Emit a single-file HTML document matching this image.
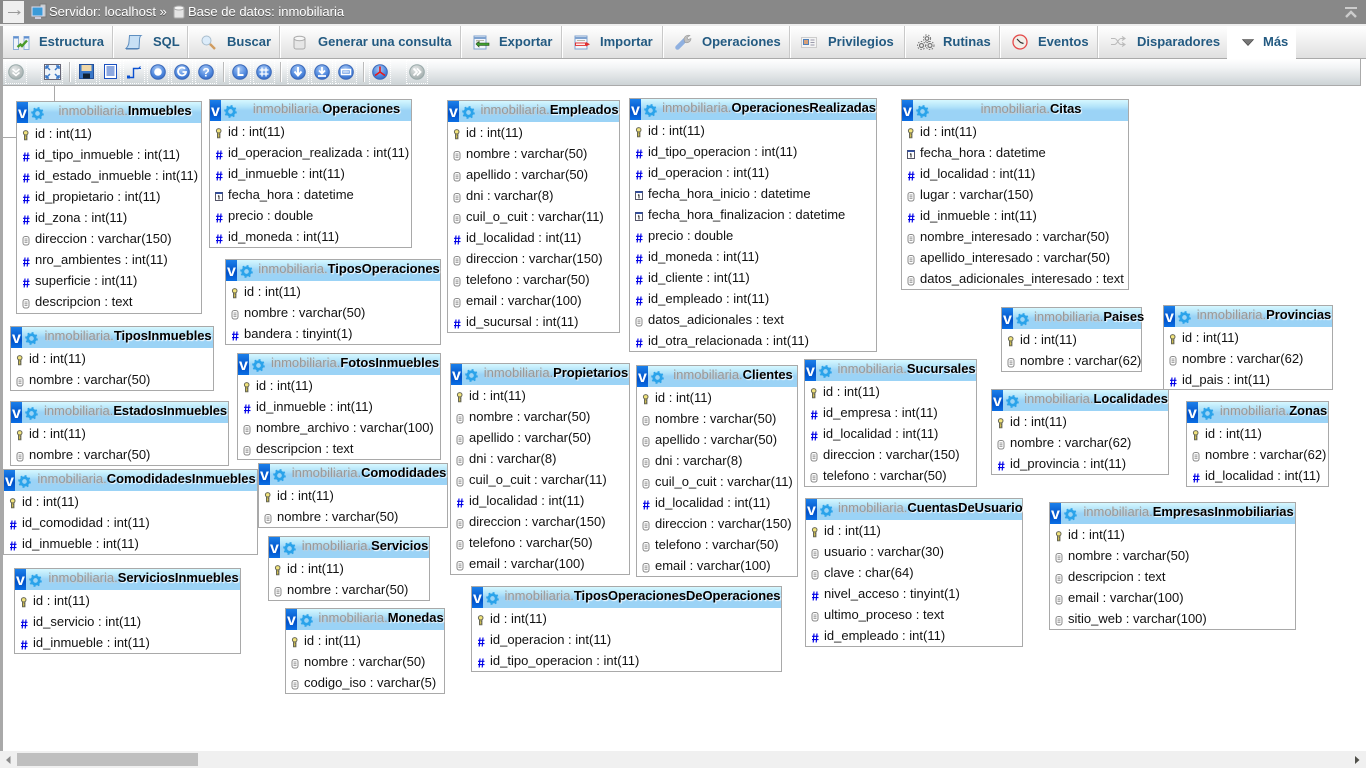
<!DOCTYPE html>
<html lang="es">
<head>
<meta charset="utf-8">
<title>Base de datos: inmobiliaria</title>
<style>
html,body{margin:0;padding:0;width:1366px;height:768px;overflow:hidden;background:#fff;font-family:"Liberation Sans",Arial,sans-serif;font-size:13px;color:#000}
#bar{position:absolute;left:0;top:0;width:1366px;height:24px;background:#888}
#arrow{position:absolute;left:3px;top:1px;width:21px;height:22px;background:#efefef}
.bt{position:absolute;top:3px;line-height:18px;color:#fff;text-shadow:0 1px 0 #555;white-space:nowrap}
#white1{position:absolute;left:0;top:24px;width:1366px;height:2px;background:#eee}
#tabs{position:absolute;left:3px;top:26px;width:1363px;height:32px;background:linear-gradient(#fff,#e0e0e0);border-bottom:1px solid #aaa}
.sep{position:absolute;top:26px;width:1px;height:32px;background:#c9c9c9;border-right:1px solid #fff}
.tab{position:absolute;top:26px;line-height:32px;font-weight:bold;color:#235a81;white-space:nowrap}
#mas{position:absolute;left:1227px;top:26px;width:69px;height:33px;background:#fff}
#tool{position:absolute;left:3px;top:59px;width:1357px;height:26px;background:linear-gradient(#fff 0%,#f3f5f6 30%,#cdd3d6 100%);border-right:1px solid #aaa;border-bottom:1px solid #aaa}
.ts{position:absolute;top:62px;width:1px;height:20px;background:#bbb;border-right:1px solid #fff}
.tb{position:absolute;top:60px;width:20px;height:22px;border:1px dotted #fff}
.ic{position:absolute;overflow:visible}
#left2{position:absolute;left:0;top:24px;width:3px;height:727px;background:#a9a9a9}
.ln{position:absolute;background:#a9a9a9}
#sb{position:absolute;left:0;top:751px;width:1366px;height:17px;background:#f0f0f0}
#th{position:absolute;left:17px;top:2px;width:181px;height:13px;background:#bfbfbf}
.t{position:absolute;box-sizing:border-box;border:1px solid #a9a9a9;background:#fff;white-space:nowrap}
.h{position:relative;height:21px;background:linear-gradient(#d6f7ff 0%,#b5e5fa 30%,#9bd3f6 50%,#9bd3f6 100%)}
.v{position:absolute;left:0;top:0;width:11px;height:21px;background:linear-gradient(#1b80ea,#0050c8 60%,#0a6fe5);color:#fff;font-weight:bold;font-size:16px;line-height:23px;text-align:center}
.g{position:absolute;left:14px;top:5px;width:13px;height:13px}
.n{position:absolute;left:32px;right:0;top:0;text-align:center;line-height:17px;color:#999;text-shadow:1px 1px 1px #ccc}
.n b{color:#000;text-shadow:1px 1px 1px #fff;letter-spacing:-.07px}
.t p{position:relative;margin:0;height:21px;line-height:21px;padding-left:18px;color:#111}
.t p svg{position:absolute;left:4px;top:7px;width:10px;height:12px}
</style>
</head>
<body>
<svg width="0" height="0" style="position:absolute">
<defs>
<radialGradient id="bl" cx=".45" cy=".3" r=".8"><stop offset="0" stop-color="#a9c9f5"/><stop offset=".6" stop-color="#4f88de"/><stop offset="1" stop-color="#2a5cb8"/></radialGradient>
<radialGradient id="gy" cx=".4" cy=".3" r=".8"><stop offset="0" stop-color="#e5e8e8"/><stop offset="1" stop-color="#9aa5a5"/></radialGradient>
<symbol id="k" viewBox="0 0 10 12"><ellipse cx="4.700" cy="2.800" rx="2.300" ry="2.200" fill="#f2e47c" stroke="#665"/><path d="M3.500 5h2.400v4.800H3.500z" fill="#e0cc50" stroke="#665"/><path d="M4.700 6.600h1.200M4.700 8.200h1.200" stroke="#665"/></symbol>
<symbol id="f" viewBox="0 0 10 12"><path d="M4 1.500 3.200 10.500M7 1.500 6.200 10.500M2 4.300h6.500M2 7.600h6.500" stroke="#0000e8" stroke-width="1.150" fill="none"/></symbol>
<symbol id="s" viewBox="0 0 10 12"><rect x="2" y="1.500" width="6" height="8.500" rx="2.200" fill="#fff" stroke="#8a8a8a"/><path d="M3.500 4h3M3.500 5.700h3M3.500 7.400h3" stroke="#9a9a9a"/></symbol>
<symbol id="d" viewBox="0 0 10 12"><rect x="1.500" y="1.500" width="7" height="8" fill="#fff" stroke="#556"/><path d="M1.500 2.100h7" stroke="#2a48a0" stroke-width="1.700"/><path d="M5 4.500v4" stroke="#222"/><path d="M4 5.300l1-.8" stroke="#222"/></symbol>
<symbol id="gr" viewBox="0 0 14 14"><circle cx="7" cy="7" r="4" fill="none" stroke="#2ba3ea" stroke-width="3"/><circle cx="7" cy="7" r="6" fill="none" stroke="#2ba3ea" stroke-width="1.600" stroke-dasharray="2.200 2.500"/></symbol>
<symbol id="b" viewBox="0 0 16 16"><circle cx="8" cy="8" r="7.300" fill="url(#bl)" stroke="#3a68b8"/></symbol>
</defs>
</svg>

<div id="left2"></div>
<div id="bar"></div>
<div id="arrow"></div>
<svg class="ic" style="left:8px;top:9px" width="13" height="7"><path d="M0 3.500h12M9.500 1.500l2.500 2-2.500 2" stroke="#999" fill="none"/></svg>
<svg class="ic" style="left:31px;top:4px" width="16" height="16"><rect x="9" y="0" width="6" height="13" fill="#c8ccd0" stroke="#777"/><rect x="1" y="3" width="11" height="9" fill="#3a9ad8" stroke="#dde"/><path d="M4 14h6" stroke="#ccd" stroke-width="2"/></svg>
<div class="bt" style="left:49px">Servidor: localhost »</div>
<svg class="ic" style="left:173px;top:5px" width="12" height="15"><rect x="1" y="2" width="10" height="11" rx="1.500" fill="#e4e4e4" stroke="#aaa"/><ellipse cx="6" cy="3" rx="5" ry="2" fill="#f6f6f6" stroke="#aaa"/></svg>
<div class="bt" style="left:188px">Base de datos: inmobiliaria</div>
<svg class="ic" style="left:1345px;top:7px" width="12" height="11"><path d="M0 1h12" stroke="#ccc" stroke-width="2"/><path d="M1 10 6 5l5 5" stroke="#ccc" stroke-width="2.400" fill="none"/></svg>
<div id="white1"></div>

<div id="tabs"></div>
<div id="mas"></div>
<i class="sep" style="left:112px"></i><i class="sep" style="left:187px"></i><i class="sep" style="left:279px"></i><i class="sep" style="left:460px"></i><i class="sep" style="left:561px"></i><i class="sep" style="left:662px"></i><i class="sep" style="left:789px"></i><i class="sep" style="left:904px"></i><i class="sep" style="left:999px"></i><i class="sep" style="left:1097px"></i>
<div class="tab" style="left:39px">Estructura</div>
<div class="tab" style="left:153px">SQL</div>
<div class="tab" style="left:227px">Buscar</div>
<div class="tab" style="left:318px">Generar una consulta</div>
<div class="tab" style="left:499px">Exportar</div>
<div class="tab" style="left:600px">Importar</div>
<div class="tab" style="left:702px">Operaciones</div>
<div class="tab" style="left:828px">Privilegios</div>
<div class="tab" style="left:943px">Rutinas</div>
<div class="tab" style="left:1038px">Eventos</div>
<div class="tab" style="left:1137px">Disparadores</div>
<div class="tab" style="left:1263px">Más</div>

<svg class="ic" style="left:13px;top:35px" width="17" height="16"><rect x=".5" y="1.500" width="5" height="13" fill="#eef3fa" stroke="#8fb0d8"/><rect x="11" y="1.500" width="5" height="13" fill="#eef3fa" stroke="#8fb0d8"/><path d="M.5 2.500h5M11 2.500h5" stroke="#5f8fd0" stroke-width="2"/><path d="M4.500 12 7.500 9.500 9 11 14 5.500" stroke="#4a9a28" stroke-width="2.400" fill="none"/></svg>
<svg class="ic" style="left:125px;top:34px" width="17" height="17"><path d="M4.500 1.500H16c-1.500 1-1.500 3-1.500 5l-.5 8H1c2-2 3-4 3-7z" fill="#c8e0f5" stroke="#5f8fc0"/><path d="M1 15h11c1 0 2-.5 2-1" stroke="#4a7ab0" fill="none"/></svg>
<svg class="ic" style="left:201px;top:35px" width="15" height="15"><circle cx="5.500" cy="5.500" r="4.500" fill="#dcecfa" stroke="#a8bccc"/><path d="M9 9l5 5" stroke="#d09c60" stroke-width="2.400"/></svg>
<svg class="ic" style="left:293px;top:35px" width="13" height="16"><rect x="1" y="2" width="11" height="12" rx="2" fill="#e6e6e6" stroke="#aaa"/><ellipse cx="6.500" cy="3.500" rx="5.500" ry="2.200" fill="#f6f6f6" stroke="#aaa"/></svg>
<svg class="ic" style="left:473px;top:35px" width="17" height="15"><rect x="1" y="1" width="12" height="13" fill="#f3f5fa" stroke="#7fa3d0"/><path d="M1 3h12" stroke="#7fa3d0" stroke-width="2"/><path d="M3 5.500h8M3 7h4" stroke="#b8b8a8"/><path d="M3 9 6 6.500V8h10v2.400H6V12z" fill="#40a030" stroke="#204a18" stroke-width=".6"/></svg>
<svg class="ic" style="left:574px;top:35px" width="17" height="15"><rect x="1" y="1" width="12" height="13" fill="#f3f5fa" stroke="#7fa3d0"/><path d="M1 3h12" stroke="#7fa3d0" stroke-width="2"/><path d="M3 5.500h8" stroke="#b8b8a8"/><rect x="1.500" y="8" width="10" height="2.400" fill="#fff" stroke="#e03030"/><path d="M12 7l4 2.300-4 2.200z" fill="#e03030"/></svg>
<svg class="ic" style="left:675px;top:33px" width="18" height="18"><path d="M2.500 14.500 10 7" stroke="#8fb0e0" stroke-width="4.500" stroke-linecap="round"/><path d="M9 6.500c0-3 3-5 6-4l-3 2 1 2 3-1c0 3-3 5-6 4z" fill="#c0c0c0" stroke="#999" stroke-width=".6"/></svg>
<svg class="ic" style="left:801px;top:36px" width="16" height="14"><rect x=".5" y="1.500" width="15" height="10" fill="#f4f4f4" stroke="#ccc"/><rect x="2.500" y="3.500" width="5" height="5" fill="#d8a078" stroke="#5080b8"/><path d="M9.500 4h4M9.500 6.500h4M9.500 9h4" stroke="#99a"/></svg>
<svg class="ic" style="left:917px;top:34px" width="18" height="17"><g fill="none" stroke="#777"><circle cx="4.500" cy="11.500" r="2" stroke-width="1.200"/><circle cx="4.500" cy="11.500" r="4" stroke-dasharray="1.500 1.500"/><circle cx="13" cy="11.500" r="2" stroke-width="1.200"/><circle cx="13" cy="11.500" r="4" stroke-dasharray="1.500 1.500"/><circle cx="10" cy="4.500" r="1.800" stroke-width="1.200"/><circle cx="10" cy="4.500" r="3.600" stroke-dasharray="1.500 1.500"/></g></svg>
<svg class="ic" style="left:1012px;top:34px" width="16" height="16"><circle cx="8" cy="8" r="7" fill="#f2eee8" stroke="#e44848" stroke-width="1.300"/><path d="M5 5 8.500 8.500 11.500 9.500" stroke="#333" stroke-width="1.200" fill="none"/></svg>
<svg class="ic" style="left:1111px;top:36px" width="15" height="12"><path d="M0 2.500h3.500c3 0 3.500 6 6.500 6h3M0 8.500h3.500c3 0 3.500-6 6.500-6h3M11 .5l3 2-3 2M11 6.500l3 2-3 2" fill="none" stroke="#bbb" stroke-width="1.100"/></svg>
<svg class="ic" style="left:1242px;top:39px" width="12" height="7"><path d="M.5.500h11L6 6.500z" fill="#777" stroke="#444" stroke-width=".6"/></svg>

<div id="tool"></div>
<i class="ts" style="left:69px"></i><i class="ts" style="left:223px"></i><i class="ts" style="left:280px"></i><i class="ts" style="left:363px"></i>
<i class="tb" style="left:5px"></i><i class="tb" style="left:41px"></i><i class="tb" style="left:75px"></i><i class="tb" style="left:99px"></i><i class="tb" style="left:123px"></i><i class="tb" style="left:147px"></i><i class="tb" style="left:171px"></i><i class="tb" style="left:195px"></i><i class="tb" style="left:229px"></i><i class="tb" style="left:253px"></i><i class="tb" style="left:287px"></i><i class="tb" style="left:311px"></i><i class="tb" style="left:335px"></i><i class="tb" style="left:369px"></i><i class="tb" style="left:406px"></i>

<svg class="ic" style="left:8px;top:64px" width="16" height="16"><circle cx="8" cy="8" r="7.300" fill="url(#gy)" stroke="#9aa"/><path d="M4.500 5 8 8l3.500-3M4.500 8.500 8 11.500l3.500-3" stroke="#fff" stroke-width="1.500" fill="none"/></svg>
<svg class="ic" style="left:44px;top:64px" width="17" height="16"><rect x=".5" y=".5" width="16" height="15" fill="#f0f4f8" stroke="#667"/><path d="M2 2l4 4M15 2l-4 4M2 14l4-4M15 14l-4-4M2 2h3M2 2v3M15 2h-3M15 2v3M2 14h3M2 14v-3M15 14h-3M15 14v-3" stroke="#3a78c8" stroke-width="1.500" fill="none"/></svg>
<svg class="ic" style="left:79px;top:64px" width="15" height="15"><rect x=".5" y=".5" width="14" height="14" fill="#3a78c8" stroke="#24509a"/><rect x="2.500" y="1" width="10" height="6" fill="#f0d8a8"/><rect x="4" y="9.500" width="7" height="5" fill="#123"/></svg>
<svg class="ic" style="left:104px;top:64px" width="13" height="15"><rect x=".5" y=".5" width="12" height="14" fill="#fff" stroke="#1a50c0"/><path d="M2.500 3h8M2.500 5h8M2.500 7h8M2.500 9h8M2.500 11h8" stroke="#1a50c0" stroke-width="1"/></svg>
<svg class="ic" style="left:127px;top:65px" width="15" height="14"><path d="M1.500 12.500h5v-9h5" stroke="#0a50d0" stroke-width="1.400" fill="none"/><rect x="0" y="10.500" width="3" height="3" fill="#0a50d0"/><path d="M11.500 3.500l2-2M11.500 3.500h2.500" stroke="#0a50d0"/></svg>

<svg class="ic" style="left:150px;top:64px" width="16" height="16"><use href="#b"/><circle cx="8" cy="8" r="3.800" fill="#fff"/></svg>
<svg class="ic" style="left:174px;top:64px" width="16" height="16"><use href="#b"/><path d="M11 4.800A4 4 0 1 0 12 8H8.500" stroke="#fff" stroke-width="1.800" fill="none"/></svg>
<svg class="ic" style="left:198px;top:64px" width="16" height="16"><use href="#b"/><text x="8" y="12.500" text-anchor="middle" font-family="Liberation Sans,sans-serif" font-weight="bold" font-size="12" fill="#fff">?</text></svg>
<svg class="ic" style="left:232px;top:64px" width="16" height="16"><use href="#b"/><path d="M6.500 3.500v7.500h5" stroke="#fff" stroke-width="2" fill="none"/></svg>
<svg class="ic" style="left:256px;top:64px" width="16" height="16"><use href="#b"/><path d="M6 3.500v9M10 3.500v9M3.500 6h9M3.500 10h9" stroke="#fff" stroke-width="1.300"/></svg>
<svg class="ic" style="left:290px;top:64px" width="16" height="16"><use href="#b"/><path d="M8 3v8M4.500 7.500 8 11.500l3.500-4" stroke="#fff" stroke-width="2" fill="none"/></svg>
<svg class="ic" style="left:314px;top:64px" width="16" height="16"><use href="#b"/><path d="M8 3v6M5 6.500 8 9.500l3-3M4 12h8" stroke="#fff" stroke-width="1.800" fill="none"/></svg>
<svg class="ic" style="left:338px;top:64px" width="16" height="16"><use href="#b"/><path d="M3.500 5.500h9v5h-9z" fill="none" stroke="#fff" stroke-width="1.500"/><path d="M5 8h6" stroke="#fff"/></svg>
<svg class="ic" style="left:372px;top:64px" width="16" height="16"><use href="#b"/><path d="M8 2.500 8 8M8 8 3 11.500M8 8l5 3.500" stroke="#e81818" stroke-width="1.600" fill="none"/></svg>
<svg class="ic" style="left:409px;top:64px" width="16" height="16"><circle cx="8" cy="8" r="7.300" fill="url(#gy)" stroke="#9aa"/><path d="M4.500 4.500 8 8l-3.500 3.500M8 4.500 11.500 8 8 11.500" stroke="#fff" stroke-width="1.800" fill="none"/></svg>

<div class="ln" style="left:54px;top:86px;width:1px;height:15px"></div>
<div class="ln" style="left:3px;top:137px;width:13px;height:1px"></div>

<div class="t" style="left:16px;top:101px;width:186px;height:213px"><div class="h"><div class="v">v</div><svg class="g"><use href="#gr"/></svg><div class="n">inmobiliaria.<b>Inmuebles</b></div></div>
<p><svg><use href="#k"/></svg>id : int(11)</p><p><svg><use href="#f"/></svg>id_tipo_inmueble : int(11)</p><p><svg><use href="#f"/></svg>id_estado_inmueble : int(11)</p><p><svg><use href="#f"/></svg>id_propietario : int(11)</p><p><svg><use href="#f"/></svg>id_zona : int(11)</p><p><svg><use href="#s"/></svg>direccion : varchar(150)</p><p><svg><use href="#f"/></svg>nro_ambientes : int(11)</p><p><svg><use href="#f"/></svg>superficie : int(11)</p><p><svg><use href="#s"/></svg>descripcion : text</p></div>

<div class="t" style="left:209px;top:99px;width:203px;height:149px"><div class="h"><div class="v">v</div><svg class="g"><use href="#gr"/></svg><div class="n">inmobiliaria.<b>Operaciones</b></div></div>
<p><svg><use href="#k"/></svg>id : int(11)</p><p><svg><use href="#f"/></svg>id_operacion_realizada : int(11)</p><p><svg><use href="#f"/></svg>id_inmueble : int(11)</p><p><svg><use href="#d"/></svg>fecha_hora : datetime</p><p><svg><use href="#f"/></svg>precio : double</p><p><svg><use href="#f"/></svg>id_moneda : int(11)</p></div>

<div class="t" style="left:447px;top:100px;width:173px;height:233px"><div class="h"><div class="v">v</div><svg class="g"><use href="#gr"/></svg><div class="n">inmobiliaria.<b>Empleados</b></div></div>
<p><svg><use href="#k"/></svg>id : int(11)</p><p><svg><use href="#s"/></svg>nombre : varchar(50)</p><p><svg><use href="#s"/></svg>apellido : varchar(50)</p><p><svg><use href="#s"/></svg>dni : varchar(8)</p><p><svg><use href="#s"/></svg>cuil_o_cuit : varchar(11)</p><p><svg><use href="#f"/></svg>id_localidad : int(11)</p><p><svg><use href="#s"/></svg>direccion : varchar(150)</p><p><svg><use href="#s"/></svg>telefono : varchar(50)</p><p><svg><use href="#s"/></svg>email : varchar(100)</p><p><svg><use href="#f"/></svg>id_sucursal : int(11)</p></div>

<div class="t" style="left:629px;top:98px;width:248px;height:254px"><div class="h"><div class="v">v</div><svg class="g"><use href="#gr"/></svg><div class="n">inmobiliaria.<b>OperacionesRealizadas</b></div></div>
<p><svg><use href="#k"/></svg>id : int(11)</p><p><svg><use href="#f"/></svg>id_tipo_operacion : int(11)</p><p><svg><use href="#f"/></svg>id_operacion : int(11)</p><p><svg><use href="#d"/></svg>fecha_hora_inicio : datetime</p><p><svg><use href="#d"/></svg>fecha_hora_finalizacion : datetime</p><p><svg><use href="#f"/></svg>precio : double</p><p><svg><use href="#f"/></svg>id_moneda : int(11)</p><p><svg><use href="#f"/></svg>id_cliente : int(11)</p><p><svg><use href="#f"/></svg>id_empleado : int(11)</p><p><svg><use href="#s"/></svg>datos_adicionales : text</p><p><svg><use href="#f"/></svg>id_otra_relacionada : int(11)</p></div>

<div class="t" style="left:901px;top:99px;width:228px;height:191px"><div class="h"><div class="v">v</div><svg class="g"><use href="#gr"/></svg><div class="n">inmobiliaria.<b>Citas</b></div></div>
<p><svg><use href="#k"/></svg>id : int(11)</p><p><svg><use href="#d"/></svg>fecha_hora : datetime</p><p><svg><use href="#f"/></svg>id_localidad : int(11)</p><p><svg><use href="#s"/></svg>lugar : varchar(150)</p><p><svg><use href="#f"/></svg>id_inmueble : int(11)</p><p><svg><use href="#s"/></svg>nombre_interesado : varchar(50)</p><p><svg><use href="#s"/></svg>apellido_interesado : varchar(50)</p><p><svg><use href="#s"/></svg>datos_adicionales_interesado : text</p></div>

<div class="t" style="left:225px;top:259px;width:216px;height:86px"><div class="h"><div class="v">v</div><svg class="g"><use href="#gr"/></svg><div class="n">inmobiliaria.<b>TiposOperaciones</b></div></div>
<p><svg><use href="#k"/></svg>id : int(11)</p><p><svg><use href="#s"/></svg>nombre : varchar(50)</p><p><svg><use href="#f"/></svg>bandera : tinyint(1)</p></div>

<div class="t" style="left:10px;top:326px;width:204px;height:65px"><div class="h"><div class="v">v</div><svg class="g"><use href="#gr"/></svg><div class="n">inmobiliaria.<b>TiposInmuebles</b></div></div>
<p><svg><use href="#k"/></svg>id : int(11)</p><p><svg><use href="#s"/></svg>nombre : varchar(50)</p></div>

<div class="t" style="left:237px;top:353px;width:204px;height:107px"><div class="h"><div class="v">v</div><svg class="g"><use href="#gr"/></svg><div class="n">inmobiliaria.<b>FotosInmuebles</b></div></div>
<p><svg><use href="#k"/></svg>id : int(11)</p><p><svg><use href="#f"/></svg>id_inmueble : int(11)</p><p><svg><use href="#s"/></svg>nombre_archivo : varchar(100)</p><p><svg><use href="#s"/></svg>descripcion : text</p></div>

<div class="t" style="left:450px;top:363px;width:180px;height:212px"><div class="h"><div class="v">v</div><svg class="g"><use href="#gr"/></svg><div class="n">inmobiliaria.<b>Propietarios</b></div></div>
<p><svg><use href="#k"/></svg>id : int(11)</p><p><svg><use href="#s"/></svg>nombre : varchar(50)</p><p><svg><use href="#s"/></svg>apellido : varchar(50)</p><p><svg><use href="#s"/></svg>dni : varchar(8)</p><p><svg><use href="#s"/></svg>cuil_o_cuit : varchar(11)</p><p><svg><use href="#f"/></svg>id_localidad : int(11)</p><p><svg><use href="#s"/></svg>direccion : varchar(150)</p><p><svg><use href="#s"/></svg>telefono : varchar(50)</p><p><svg><use href="#s"/></svg>email : varchar(100)</p></div>

<div class="t" style="left:636px;top:365px;width:162px;height:212px"><div class="h"><div class="v">v</div><svg class="g"><use href="#gr"/></svg><div class="n">inmobiliaria.<b>Clientes</b></div></div>
<p><svg><use href="#k"/></svg>id : int(11)</p><p><svg><use href="#s"/></svg>nombre : varchar(50)</p><p><svg><use href="#s"/></svg>apellido : varchar(50)</p><p><svg><use href="#s"/></svg>dni : varchar(8)</p><p><svg><use href="#s"/></svg>cuil_o_cuit : varchar(11)</p><p><svg><use href="#f"/></svg>id_localidad : int(11)</p><p><svg><use href="#s"/></svg>direccion : varchar(150)</p><p><svg><use href="#s"/></svg>telefono : varchar(50)</p><p><svg><use href="#s"/></svg>email : varchar(100)</p></div>

<div class="t" style="left:804px;top:359px;width:173px;height:128px"><div class="h"><div class="v">v</div><svg class="g"><use href="#gr"/></svg><div class="n">inmobiliaria.<b>Sucursales</b></div></div>
<p><svg><use href="#k"/></svg>id : int(11)</p><p><svg><use href="#f"/></svg>id_empresa : int(11)</p><p><svg><use href="#f"/></svg>id_localidad : int(11)</p><p><svg><use href="#s"/></svg>direccion : varchar(150)</p><p><svg><use href="#s"/></svg>telefono : varchar(50)</p></div>

<div class="t" style="left:10px;top:401px;width:219px;height:65px"><div class="h"><div class="v">v</div><svg class="g"><use href="#gr"/></svg><div class="n">inmobiliaria.<b>EstadosInmuebles</b></div></div>
<p><svg><use href="#k"/></svg>id : int(11)</p><p><svg><use href="#s"/></svg>nombre : varchar(50)</p></div>

<div class="t" style="left:3px;top:469px;width:255px;height:86px"><div class="h"><div class="v">v</div><svg class="g"><use href="#gr"/></svg><div class="n">inmobiliaria.<b>ComodidadesInmuebles</b></div></div>
<p><svg><use href="#k"/></svg>id : int(11)</p><p><svg><use href="#f"/></svg>id_comodidad : int(11)</p><p><svg><use href="#f"/></svg>id_inmueble : int(11)</p></div>

<div class="t" style="left:258px;top:463px;width:190px;height:65px"><div class="h"><div class="v">v</div><svg class="g"><use href="#gr"/></svg><div class="n">inmobiliaria.<b>Comodidades</b></div></div>
<p><svg><use href="#k"/></svg>id : int(11)</p><p><svg><use href="#s"/></svg>nombre : varchar(50)</p></div>

<div class="t" style="left:268px;top:536px;width:162px;height:65px"><div class="h"><div class="v">v</div><svg class="g"><use href="#gr"/></svg><div class="n">inmobiliaria.<b>Servicios</b></div></div>
<p><svg><use href="#k"/></svg>id : int(11)</p><p><svg><use href="#s"/></svg>nombre : varchar(50)</p></div>

<div class="t" style="left:14px;top:568px;width:227px;height:86px"><div class="h"><div class="v">v</div><svg class="g"><use href="#gr"/></svg><div class="n">inmobiliaria.<b>ServiciosInmuebles</b></div></div>
<p><svg><use href="#k"/></svg>id : int(11)</p><p><svg><use href="#f"/></svg>id_servicio : int(11)</p><p><svg><use href="#f"/></svg>id_inmueble : int(11)</p></div>

<div class="t" style="left:285px;top:608px;width:160px;height:86px"><div class="h"><div class="v">v</div><svg class="g"><use href="#gr"/></svg><div class="n">inmobiliaria.<b>Monedas</b></div></div>
<p><svg><use href="#k"/></svg>id : int(11)</p><p><svg><use href="#s"/></svg>nombre : varchar(50)</p><p><svg><use href="#s"/></svg>codigo_iso : varchar(5)</p></div>

<div class="t" style="left:471px;top:586px;width:311px;height:86px"><div class="h"><div class="v">v</div><svg class="g"><use href="#gr"/></svg><div class="n">inmobiliaria.<b>TiposOperacionesDeOperaciones</b></div></div>
<p><svg><use href="#k"/></svg>id : int(11)</p><p><svg><use href="#f"/></svg>id_operacion : int(11)</p><p><svg><use href="#f"/></svg>id_tipo_operacion : int(11)</p></div>

<div class="t" style="left:805px;top:498px;width:218px;height:149px"><div class="h"><div class="v">v</div><svg class="g"><use href="#gr"/></svg><div class="n">inmobiliaria.<b>CuentasDeUsuario</b></div></div>
<p><svg><use href="#k"/></svg>id : int(11)</p><p><svg><use href="#s"/></svg>usuario : varchar(30)</p><p><svg><use href="#s"/></svg>clave : char(64)</p><p><svg><use href="#f"/></svg>nivel_acceso : tinyint(1)</p><p><svg><use href="#s"/></svg>ultimo_proceso : text</p><p><svg><use href="#f"/></svg>id_empleado : int(11)</p></div>

<div class="t" style="left:1049px;top:502px;width:247px;height:128px"><div class="h"><div class="v">v</div><svg class="g"><use href="#gr"/></svg><div class="n">inmobiliaria.<b>EmpresasInmobiliarias</b></div></div>
<p><svg><use href="#k"/></svg>id : int(11)</p><p><svg><use href="#s"/></svg>nombre : varchar(50)</p><p><svg><use href="#s"/></svg>descripcion : text</p><p><svg><use href="#s"/></svg>email : varchar(100)</p><p><svg><use href="#s"/></svg>sitio_web : varchar(100)</p></div>

<div class="t" style="left:1001px;top:307px;width:141px;height:65px"><div class="h"><div class="v">v</div><svg class="g"><use href="#gr"/></svg><div class="n">inmobiliaria.<b>Paises</b></div></div>
<p><svg><use href="#k"/></svg>id : int(11)</p><p><svg><use href="#s"/></svg>nombre : varchar(62)</p></div>

<div class="t" style="left:1163px;top:305px;width:170px;height:85px"><div class="h"><div class="v">v</div><svg class="g"><use href="#gr"/></svg><div class="n">inmobiliaria.<b>Provincias</b></div></div>
<p><svg><use href="#k"/></svg>id : int(11)</p><p><svg><use href="#s"/></svg>nombre : varchar(62)</p><p><svg><use href="#f"/></svg>id_pais : int(11)</p></div>

<div class="t" style="left:991px;top:389px;width:178px;height:86px"><div class="h"><div class="v">v</div><svg class="g"><use href="#gr"/></svg><div class="n">inmobiliaria.<b>Localidades</b></div></div>
<p><svg><use href="#k"/></svg>id : int(11)</p><p><svg><use href="#s"/></svg>nombre : varchar(62)</p><p><svg><use href="#f"/></svg>id_provincia : int(11)</p></div>

<div class="t" style="left:1186px;top:401px;width:143px;height:86px"><div class="h"><div class="v">v</div><svg class="g"><use href="#gr"/></svg><div class="n">inmobiliaria.<b>Zonas</b></div></div>
<p><svg><use href="#k"/></svg>id : int(11)</p><p><svg><use href="#s"/></svg>nombre : varchar(62)</p><p><svg><use href="#f"/></svg>id_localidad : int(11)</p></div>

<div id="sb"><div id="th"></div>
<svg class="ic" style="left:6px;top:5px" width="5" height="8"><path d="M4.500 0v8L0 4z" fill="#8a8a8a"/></svg>
<svg class="ic" style="left:1355px;top:5px" width="5" height="8"><path d="M0 0v8l4.500-4z" fill="#50504a"/></svg>
</div>
</body>
</html>
